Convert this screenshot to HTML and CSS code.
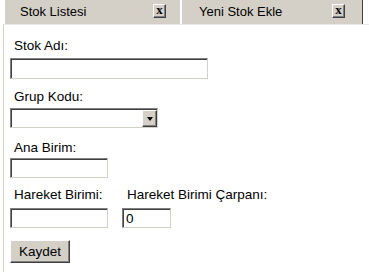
FILE: index.html
```html
<!DOCTYPE html>
<html lang="tr">
<head>
<meta charset="utf-8">
<title>Yeni Stok Ekle</title>
<link rel="stylesheet" href="styles.css">
</head>
<body>
<div class="tabs">
  <div class="tab tab-first">
    <span class="tab-title">Stok Listesi</span>
    <span class="close">x</span>
  </div>
  <div class="tab tab-second">
    <span class="tab-title">Yeni Stok Ekle</span>
    <span class="close">x</span>
  </div>
</div>
<div class="panel">
  <div class="field">
    <label class="label">Stok Adı:</label>
    <input class="input input-wide" type="text">
  </div>
  <div class="field field-select">
    <label class="label">Grup Kodu:</label>
    <div class="select-box">
      <select class="select"><option></option></select>
      <span class="arrow"><span class="tri"></span></span>
    </div>
  </div>
  <div class="field field-ana">
    <label class="label">Ana Birim:</label>
    <input class="input input-short" type="text">
  </div>
  <div class="row">
    <div class="field col">
      <label class="label">Hareket Birimi:</label>
      <input class="input input-short" type="text">
    </div>
    <div class="field col">
      <label class="label label-2">Hareket Birimi Çarpanı:</label>
      <input class="input input-num" type="text" value="0">
    </div>
  </div>
  <button class="btn" type="button">Kaydet</button>
</div>
</body>
</html>
```

FILE: styles.css
```css
html, body {
  margin: 0;
  padding: 0;
  background: #ffffff;
}
body {
  font-family: "Liberation Sans", Arial, sans-serif;
  color: #000000;
  width: 369px;
  height: 278px;
  overflow: hidden;
}
.tabs {
  display: flex;
  height: 24px;
  padding-left: 5px;
  gap: 2px;
}
.tab {
  display: flex;
  align-items: flex-start;
  background: #d4d0c8;
  height: 24px;
  box-sizing: border-box;
}
.tab-first {
  width: 175px;
  padding-left: 15px;
  padding-right: 14px;
}
.tab-second {
  width: 181px;
  padding-left: 17px;
  padding-right: 17px;
  border-right: 1px solid #404040;
}
.tab-title {
  font-size: 13px;
  line-height: 24px;
  white-space: nowrap;
}
.close {
  margin-left: auto;
  margin-top: 4px;
  width: 13px;
  height: 14px;
  box-sizing: border-box;
  background: #d4d0c8;
  border-top: 1px solid #ffffff;
  border-left: 1px solid #ffffff;
  border-right: 1px solid #404040;
  border-bottom: 1px solid #404040;
  box-shadow: inset -1px -1px 0 #808080;
  font-family: "Liberation Serif", "Times New Roman", serif;
  font-weight: bold;
  font-size: 13px;
  line-height: 10px;
  text-align: center;
}
.panel {
  margin-left: 3px;
  height: 248px;
  box-sizing: border-box;
  border-left: 1px solid #d4d0c8;
  border-top: 1px solid #eceae6;
  padding: 13px 0 0 6px;
  display: flex;
  flex-direction: column;
  align-items: flex-start;
}
.field {
  display: flex;
  flex-direction: column;
  align-items: flex-start;
}
.label {
  font-size: 13.5px;
  line-height: 16px;
  padding-left: 4px;
  margin-bottom: 4px;
  white-space: nowrap;
}
.label-2 {
  padding-left: 5px;
}
.input {
  box-sizing: border-box;
  height: 21px;
  margin: 0;
  padding: 1px 3px 0;
  font-family: "Liberation Sans", Arial, sans-serif;
  font-size: 13.5px;
  background: #ffffff;
  border-style: solid;
  border-width: 1px;
  border-color: #808080 #d4d0c8 #d4d0c8 #808080;
  box-shadow: inset 1px 1px 0 #404040;
  outline: none;
}
.input-wide { width: 198px; }
.input-short { width: 98px; height: 20px; }
.input-num { width: 49px; height: 20px; }
.field-select { margin-top: 10px; }
.field-select .label { margin-bottom: 3px; }
.select-box {
  display: flex;
  width: 148px;
  height: 20px;
  box-sizing: border-box;
  background: #ffffff;
  border-style: solid;
  border-width: 1px;
  border-color: #808080 #d4d0c8 #d4d0c8 #808080;
  box-shadow: inset 1px 1px 0 #404040;
  padding: 1px 0 0 1px;
}
.select {
  flex: 1;
  appearance: none;
  -webkit-appearance: none;
  border: none;
  background: transparent;
  margin: 0;
  padding: 0;
  outline: none;
  font-size: 13px;
}
.arrow {
  width: 15px;
  height: 17px;
  box-sizing: border-box;
  background: #d4d0c8;
  border-top: 1px solid #ffffff;
  border-left: 1px solid #ffffff;
  border-right: 1px solid #404040;
  border-bottom: 1px solid #404040;
  box-shadow: inset -1px -1px 0 #808080;
  display: flex;
  align-items: center;
  justify-content: center;
}
.tri {
  width: 0;
  height: 0;
  border-left: 3.5px solid transparent;
  border-right: 3.5px solid transparent;
  border-top: 4px solid #000000;
}
.field-ana { margin-top: 12px; }
.field-ana .label { margin-bottom: 2px; }
.row {
  display: flex;
  gap: 14px;
  margin-top: 9px;
}
.row .label { margin-bottom: 5px; }
.btn {
  margin-top: 12px;
  width: 60px;
  height: 23px;
  box-sizing: border-box;
  padding: 0;
  background: #d4d0c8;
  border-top: 1px solid #ffffff;
  border-left: 1px solid #ffffff;
  border-right: 1px solid #404040;
  border-bottom: 1px solid #404040;
  box-shadow: inset -1px -1px 0 #808080;
  font-family: "Liberation Sans", Arial, sans-serif;
  font-size: 13.5px;
  color: #000000;
}
```
